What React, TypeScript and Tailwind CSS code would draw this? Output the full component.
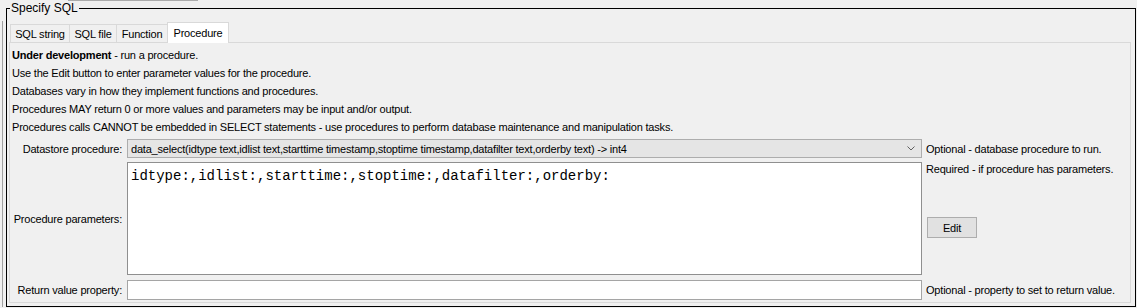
export default function App() {
  const lines = [
    "Use the Edit button to enter parameter values for the procedure.",
    "Databases vary in how they implement functions and procedures.",
    "Procedures MAY return 0 or more values and parameters may be input and/or output.",
    "Procedures calls CANNOT be embedded in SELECT statements - use procedures to perform database maintenance and manipulation tasks.",
  ];
  return (
    <div className="w-[1137px] h-[308px] bg-[#f0f0f0] overflow-hidden font-['Liberation_Sans',Arial,sans-serif] text-[11px] tracking-[-0.2px] text-black">
      <div className="ml-[68px] w-[130px] h-px bg-[#ababab]" />
      <div className="flex">
        <div className="w-[2px]" />
        <div className="w-px bg-[#a0a0a0] mt-[20px]" />
        <div className="w-[3px]" />
        <fieldset className="w-[1130px] border border-black p-0 pb-[3px] m-0 min-w-0">
          <legend className="ml-[3px] px-px leading-[14px] text-[12px] tracking-normal">Specify SQL</legend>
          <div className="mt-[7px] flex items-end pl-[3px] h-[20px] relative z-10">
            <div className="w-[60px] h-[18px] border border-b-0 border-[#d9d9d9] flex items-center justify-center leading-[16px]">SQL string</div>
            <div className="-ml-px w-[48px] h-[18px] border border-b-0 border-[#d9d9d9] flex items-center justify-center leading-[16px]">SQL file</div>
            <div className="-ml-px w-[52px] h-[18px] border border-b-0 border-[#d9d9d9] flex items-center justify-center leading-[16px]">Function</div>
            <div className="-ml-px w-[62px] h-[21px] -mb-px border border-b-0 border-[#d9d9d9] bg-white flex items-start justify-center pt-[2px] leading-[16px]">Procedure</div>
          </div>
          <div className="ml-[2px] w-[1122px] h-[261px] border border-[#d9d9d9] pt-[3px]">
            <div className="pl-[2px] leading-[18px]">
              <div><span className="font-bold">Under development</span> - run a procedure.</div>
              {lines.map((l) => (
                <div key={l}>{l}</div>
              ))}
            </div>
            <div className="pl-[2px] mt-[3px] flex flex-col gap-[4px]">
              <div className="flex items-center">
                <div className="w-[110px] text-right leading-[14px] whitespace-nowrap">Datastore procedure:</div>
                <div className="ml-[5px] w-[795px] h-[19px] bg-[#e5e5e5] border border-[#adadad] flex items-center pl-[3px] pr-[6px] leading-[14px]">
                  <span className="flex-1 whitespace-nowrap">data_select(idtype text,idlist text,starttime timestamp,stoptime timestamp,datafilter text,orderby text) -&gt; int4</span>
                  <svg width="8" height="5" viewBox="0 0 8 5" className="block">
                    <polyline points="0.5,0.5 4,4 7.5,0.5" fill="none" stroke="#606060" strokeWidth="1" />
                  </svg>
                </div>
                <div className="ml-[4px] leading-[14px] whitespace-nowrap">Optional - database procedure to run.</div>
              </div>
              <div className="flex items-stretch">
                <div className="w-[110px] text-right leading-[14px] self-center whitespace-nowrap">Procedure parameters:</div>
                <div className="ml-[5px] w-[795px] h-[113px] bg-white border border-[#8f8f8f] pl-[3px] pt-[5px] font-['Liberation_Mono','Courier_New',monospace] text-[14px] tracking-normal leading-[16px] whitespace-nowrap">
                  idtype:,idlist:,starttime:,stoptime:,datafilter:,orderby:
                </div>
                <div className="ml-[4px] flex flex-col items-start">
                  <div className="leading-[14px] whitespace-nowrap">Required - if procedure has parameters.</div>
                  <div className="mt-[41px] ml-px w-[50px] h-[21px] bg-[#e1e1e1] border border-[#adadad] flex items-center justify-center leading-[14px]">Edit</div>
                </div>
              </div>
              <div className="flex items-center mt-px">
                <div className="w-[110px] text-right leading-[14px] whitespace-nowrap">Return value property:</div>
                <div className="ml-[5px] w-[795px] h-[20px] bg-white border border-[#a5a5a5]" />
                <div className="ml-[4px] leading-[14px] whitespace-nowrap">Optional - property to set to return value.</div>
              </div>
            </div>
          </div>
        </fieldset>
      </div>
    </div>
  );
}
